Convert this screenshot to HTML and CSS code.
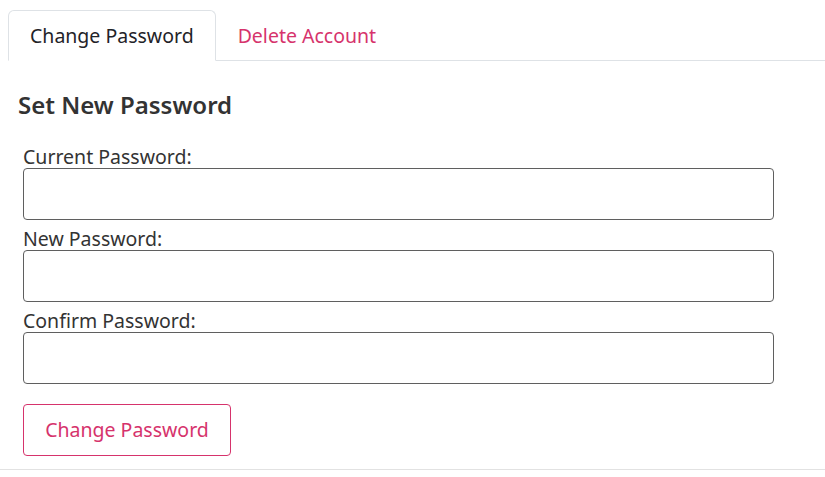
FILE: index.html
```html
<!DOCTYPE html>
<html lang="en">
<head>
<meta charset="utf-8">
<title>Account Settings</title>
<link rel="stylesheet" href="styles.css">
</head>
<body>
<div class="page">
  <nav class="tabs">
    <a class="tab active" href="#">Change Password</a>
    <a class="tab" href="#">Delete Account</a>
  </nav>
  <section class="panel">
    <h2 class="title">Set New Password</h2>
    <form class="form">
      <label class="label" for="cur">Current Password:</label>
      <input class="field" id="cur" type="password">
      <label class="label" for="new">New Password:</label>
      <input class="field" id="new" type="password">
      <label class="label" for="conf">Confirm Password:</label>
      <input class="field" id="conf" type="password">
      <button class="btn" type="button">Change Password</button>
    </form>
  </section>
</div>
<hr class="rule">
</body>
</html>
```

FILE: styles.css
```css
html, body {
  margin: 0;
  padding: 0;
  background: #fff;
}
body {
  font-family: "Noto Sans", "Open Sans", sans-serif;
  font-size: 19.5px;
  line-height: 22px;
  color: #333;
}
.page {
  padding: 10px 0 0 8px;
}
.tabs {
  display: flex;
  border-bottom: 1px solid #dee2e6;
  height: 50px;
}
.tab {
  display: block;
  padding: 14px 21px 13px 21px;
  border: 1px solid transparent;
  border-radius: 6px 6px 0 0;
  text-decoration: none;
  color: #d6336c;
  line-height: 22px;
  height: 22px;
}
.tab.active {
  color: #1f2328;
  border-color: #dee2e6 #dee2e6 #fff;
  background: #fff;
}
.panel {
  padding: 0 0 0 10px;
}
.title {
  margin: 29px 0 0 0;
  font-size: 24px;
  line-height: 29px;
  font-weight: 600;
  color: #333;
}
.form {
  display: flex;
  flex-direction: column;
  align-items: flex-start;
  padding-left: 5px;
  margin-top: 26px;
}
.label {
  display: block;
  line-height: 22px;
  padding-top: 1px;
  margin-top: 7px;
  color: #333;
}
.label:first-child {
  margin-top: 0;
}
.field {
  box-sizing: border-box;
  width: 751px;
  height: 52px;
  border: 1px solid #5f5f5f;
  border-radius: 4px;
  margin: 0;
  padding: 0 12px;
  font: inherit;
}
.btn {
  box-sizing: border-box;
  margin-top: 20px;
  width: 208px;
  height: 52px;
  border: 1px solid #d6336c;
  border-radius: 4px;
  background: #fff;
  color: #d6336c;
  font: inherit;
  line-height: 22px;
  padding: 0;
}
.rule {
  margin: 13px 0 0 0;
  border: 0;
  border-top: 1px solid #e2e2e2;
  height: 0;
}
```
